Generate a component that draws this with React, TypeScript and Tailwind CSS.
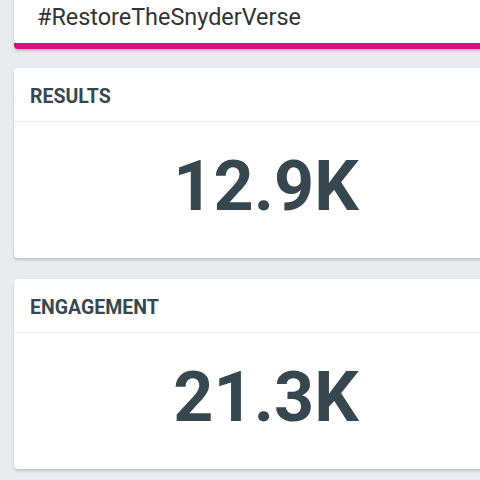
import React from "react";

const metrics = [
  { label: "RESULTS", value: "12.9K" },
  { label: "ENGAGEMENT", value: "21.3K" },
];

const StatCard = ({ label, value }: { label: string; value: string }) => (
  <div className="mt-[21px] rounded-[4px] bg-white shadow-[0_2px_3px_rgba(0,0,0,0.18)] first:mt-[19px]">
    <div className="flex h-[54px] items-center border-b border-[#eceef0] px-[16px] pt-[4px]">
      <h2 className="text-[19.5px] font-bold text-[#37474f]">{label}</h2>
    </div>
    <div className="flex h-[136px] items-center justify-center pb-[8px]">
      <p className="text-[70px] leading-none font-bold text-[#37474f]">{value}</p>
    </div>
  </div>
);

export default function App() {
  return (
    <div
      className="h-[480px] w-[480px] overflow-hidden bg-[#e9ecef]"
      style={{ fontFamily: "Roboto, 'Liberation Sans', sans-serif" }}
    >
      <div className="flex w-[532px] flex-col px-[14px] pb-6">
        {/* Hashtag card */}
        <div className="-mt-[10px] rounded-b-[4px] border-b-[6px] border-[#d80f7e] bg-white shadow-[0_2px_3px_rgba(0,0,0,0.18)]">
          <div className="flex h-[53px] items-center px-[23px] pt-[3px]">
            <span className="text-[23.4px] text-[#333333]">#RestoreTheSnyderVerse</span>
          </div>
        </div>

        <div>
          {metrics.map((m) => (
            <StatCard key={m.label} label={m.label} value={m.value} />
          ))}
        </div>
      </div>
    </div>
  );
}
